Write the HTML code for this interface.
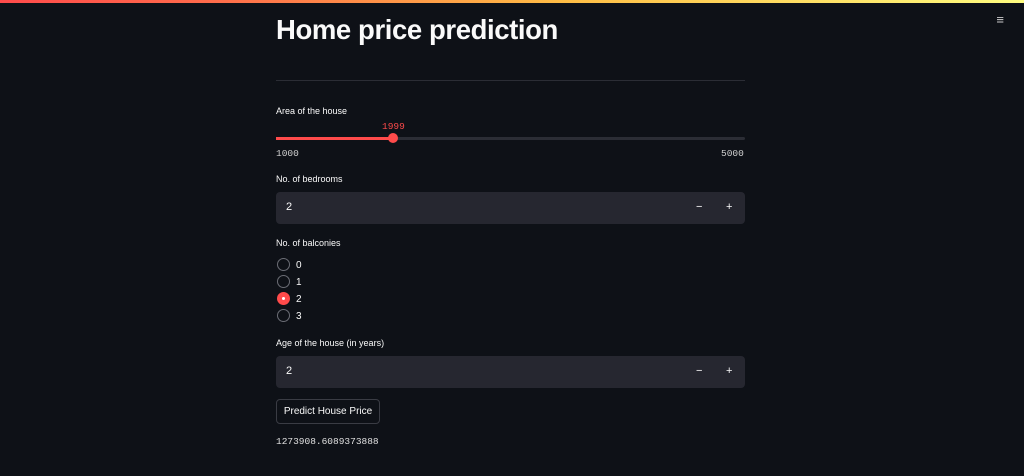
<!DOCTYPE html>
<html><head><style>
*{margin:0;padding:0;box-sizing:border-box}
body{width:1024px;height:476px;background:#0e1117;color:#fafafa;font-family:"Liberation Sans",sans-serif;position:relative;overflow:hidden}
.bar{position:absolute;top:0;left:0;width:1024px;height:3px;background:linear-gradient(90deg,#ff4b4b,#ff6a4b 20%,#ffbd45 55%,#fffd80)}
.a{position:absolute}
h1{position:absolute;left:276px;top:14px;font-size:27.5px;font-weight:700;letter-spacing:-0.4px}
.lbl{font-size:9px;color:#fafafa;left:276px}
.mono{font-family:"Liberation Mono",monospace;font-size:9.5px}
.inp{left:276px;width:469px;height:32px;background:#262730;border-radius:4px}
.inp span{position:absolute;font-size:11px;top:9px}
.r{left:277px;width:13px;height:13px;border-radius:50%;border:1px solid #6b6d75;background:#0e1117}
.rt{left:296px;font-size:10px}
</style></head><body>
<div class="bar"></div>
<h1>Home price prediction</h1>
<div style="position:absolute;right:20px;top:12px;font-size:13px;color:#ccc">≡</div>
<div class="a" style="left:276px;top:80px;width:469px;height:1px;background:#2b2d35"></div>
<div class="a lbl" style="top:106px">Area of the house</div>
<div class="a mono" style="left:382px;top:121px;color:#ff4b4b">1999</div>
<div class="a" style="left:276px;top:137px;width:469px;height:3px;background:#2b2d35;border-radius:2px"></div>
<div class="a" style="left:276px;top:137px;width:117px;height:3px;background:#ff4b4b"></div>
<div class="a" style="left:388px;top:133px;width:10px;height:10px;border-radius:50%;background:#ff4b4b"></div>
<div class="a mono" style="left:276px;top:148px;color:#d0d0d0">1000</div>
<div class="a mono" style="left:721px;top:148px;color:#d0d0d0">5000</div>
<div class="a lbl" style="top:174px">No. of bedrooms</div>
<div class="a inp" style="top:192px"><span style="left:10px">2</span><span style="left:420px">−</span><span style="left:450px">+</span></div>
<div class="a lbl" style="top:238px">No. of balconies</div>
<div class="a r" style="top:258px"></div><div class="a rt" style="top:260px">0</div>
<div class="a r" style="top:275px"></div><div class="a rt" style="top:277px">1</div>
<div class="a r" style="top:292px;background:#ff4b4b;border-color:#ff4b4b"><div style="position:absolute;left:4px;top:4px;width:3px;height:3px;border-radius:50%;background:#fff"></div></div><div class="a rt" style="top:294px">2</div>
<div class="a r" style="top:309px"></div><div class="a rt" style="top:311px">3</div>
<div class="a lbl" style="top:338px">Age of the house (in years)</div>
<div class="a inp" style="top:356px"><span style="left:10px">2</span><span style="left:420px">−</span><span style="left:450px">+</span></div>
<div class="a" style="left:276px;top:399px;width:104px;height:25px;border:1px solid #3a3c44;border-radius:4px;font-size:10px;text-align:center;line-height:23px">Predict House Price</div>
<div class="a mono" style="left:276px;top:436px;color:#e0e0e0">1273908.6089373888</div>
</body></html>
